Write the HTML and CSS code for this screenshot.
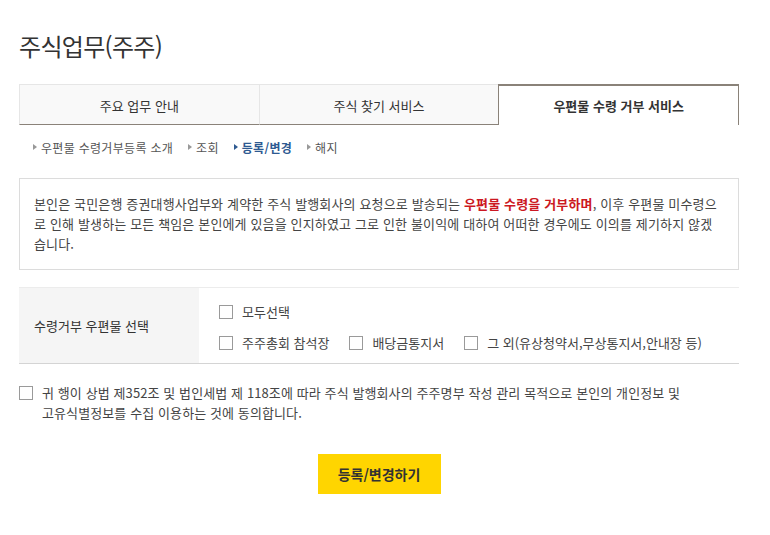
FILE: index.html
```html
<!DOCTYPE html>
<html lang="ko">
<head>
<meta charset="utf-8">
<title>주식업무(주주)</title>
<link rel="stylesheet" href="styles.css">
</head>
<body>
<div class="page">
  <h1 class="title">주식업무(주주)</h1>
  <ul class="tabs">
    <li class="tab">주요 업무 안내</li>
    <li class="tab">주식 찾기 서비스</li>
    <li class="tab active">우편물 수령 거부 서비스</li>
  </ul>
  <ul class="subnav">
    <li>우편물 수령거부등록 소개</li>
    <li>조회</li>
    <li class="on">등록/변경</li>
    <li>해지</li>
  </ul>
  <div class="notice">
    <p>본인은 국민은행 증권대행사업부와 계약한 주식 발행회사의 요청으로 발송되는 <span class="red">우편물 수령을 거부하며</span>, 이후 우편물 미수령으로 인해 발생하는 모든 책임은 본인에게 있음을 인지하였고 그로 인한 불이익에 대하여 어떠한 경우에도 이의를 제기하지 않겠습니다.</p>
  </div>
  <div class="form-row">
    <div class="th">수령거부 우편물 선택</div>
    <div class="td">
      <div class="line"><label class="chk"><span class="box"></span>모두선택</label></div>
      <div class="line">
        <label class="chk"><span class="box"></span>주주총회 참석장</label>
        <label class="chk"><span class="box"></span>배당금통지서</label>
        <label class="chk"><span class="box"></span>그 외(유상청약서,무상통지서,안내장 등)</label>
      </div>
    </div>
  </div>
  <div class="agree">
    <span class="box"></span>
    <p>귀 행이 상법 제352조 및 법인세법 제 118조에 따라 주식 발행회사의 주주명부 작성 관리 목적으로 본인의 개인정보 및<br>고유식별정보를 수집 이용하는 것에 동의합니다.</p>
  </div>
  <div class="btn-wrap">
    <button class="btn" type="button">등록/변경하기</button>
  </div>
</div>
</body>
</html>
```
FILE: styles.css
```css
* { box-sizing: border-box; }
html, body { margin: 0; padding: 0; background: #fff; }
body {
  font-family: "Noto Sans CJK KR", "Noto Sans", sans-serif;
  color: #444;
  font-size: 12px;
}
.page { width: 720px; margin-left: 19px; padding-top: 27px; }
.title {
  margin: 0;
  font-size: 24px;
  font-weight: 400;
  color: #333;
  line-height: 38px;
  letter-spacing: -0.7px;
}
.tabs {
  list-style: none;
  margin: 19px 0 0;
  padding: 0;
  display: flex;
  height: 41px;
}
.tab {
  flex: 1;
  display: flex;
  align-items: center;
  justify-content: center;
  background: #f9f9f9;
  border-top: 1px solid #e6e6e6;
  border-left: 1px solid #e6e6e6;
  border-bottom: 1px solid #8a8279;
  font-size: 13px;
  color: #333;
  padding-top: 1px;
}
.tab.active {
  background: #fff;
  border-top: 2px solid #8a8279;
  border-left: 1px solid #8a8279;
  border-right: 1px solid #8a8279;
  border-bottom: none;
  font-weight: 700;
  padding-top: 0;
}
.subnav {
  list-style: none;
  margin: 0;
  padding: 14px 0 0 14px;
  display: flex;
  gap: 15px;
  line-height: 17px;
  font-size: 12px;
  letter-spacing: 0.3px;
  color: #555;
}
.subnav li { position: relative; padding-left: 8px; }
.subnav li::before {
  content: "";
  position: absolute;
  left: 0;
  top: 5px;
  border-left: 4px solid #999;
  border-top: 3.5px solid transparent;
  border-bottom: 3.5px solid transparent;
}
.subnav li.on { color: #2e5a91; font-weight: 700; }
.subnav li.on::before { border-left-color: #2e5a91; }
.notice {
  margin-top: 22px;
  border: 1px solid #dcdcdc;
  padding: 15px 14px 0 14px;
  height: 92px;
}
.notice p {
  margin: 0;
  line-height: 20px;
  font-size: 13px;
  letter-spacing: 0.15px;
  word-break: break-all;
  color: #444;
}
.red { color: #cc1822; font-weight: 700; }
.form-row {
  margin-top: 17px;
  display: flex;
  border-top: 1px solid #ececec;
  border-bottom: 1px solid #d4d4d4;
  height: 77px;
}
.th {
  width: 180px;
  background: #f5f5f5;
  display: flex;
  align-items: center;
  padding-left: 15px;
  font-size: 13px;
  color: #333;
}
.td {
  flex: 1;
  padding: 14px 0 0 20px;
  display: flex;
  flex-direction: column;
  gap: 12px;
}
.line { display: flex; line-height: 19px; }
.chk {
  display: flex;
  align-items: center;
  font-size: 13px;
  color: #444;
  margin-right: 20px;
}
.box {
  display: inline-block;
  width: 14px;
  height: 14px;
  border: 1px solid #9a9a9a;
  background: #fff;
  margin-right: 9px;
  flex: none;
}
.agree {
  margin-top: 19px;
  display: flex;
  align-items: flex-start;
}
.agree .box { margin-top: 3px; margin-right: 9px; }
.agree p {
  margin: 0;
  line-height: 20px;
  font-size: 13px;
  letter-spacing: 0.1px;
  color: #444;
}
.btn-wrap {
  display: flex;
  justify-content: center;
  margin-top: 31px;
}
.btn {
  width: 123px;
  height: 40px;
  border: none;
  background: #ffd500;
  font-family: "Noto Sans CJK KR", "Noto Sans", sans-serif;
  font-size: 14px;
  font-weight: 700;
  color: #333;
  padding: 0;
}
```
